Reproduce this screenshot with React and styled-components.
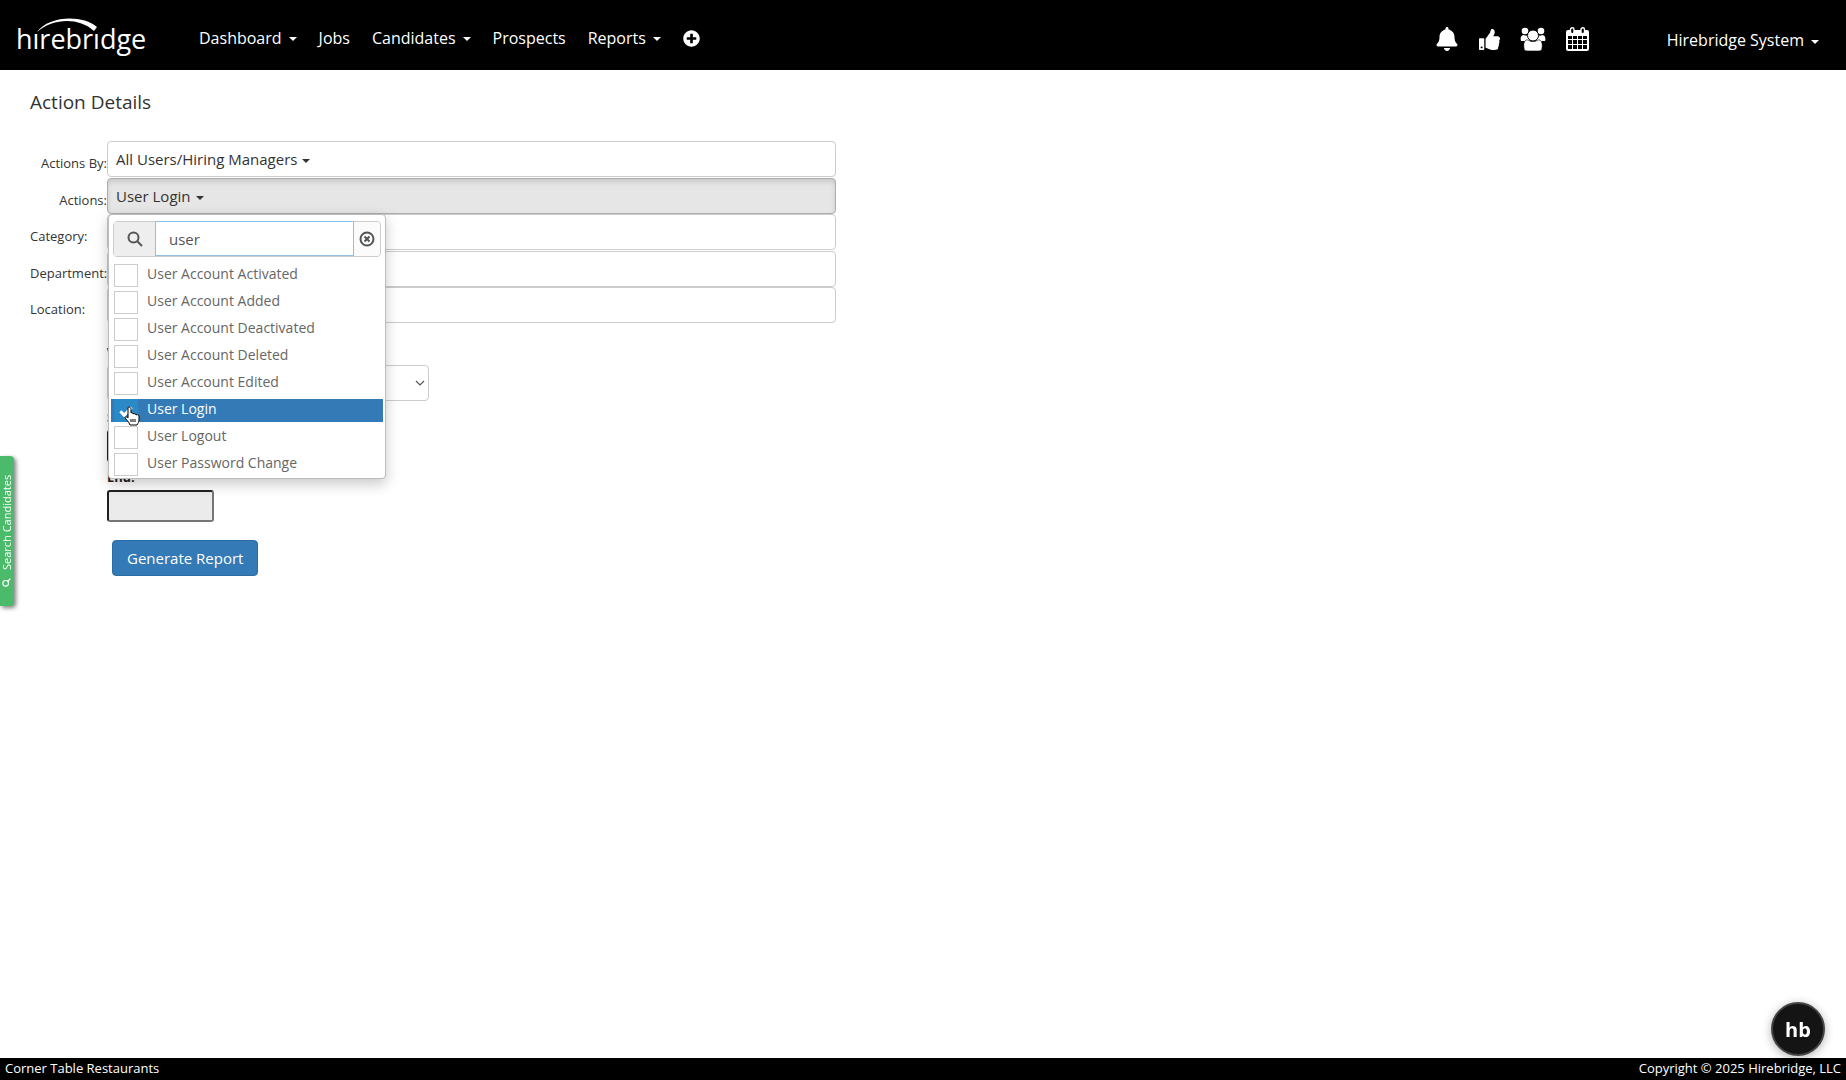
import React, { useState } from "react";
import styled, { createGlobalStyle, css } from "styled-components";
import { FaBell, FaThumbsUp, FaPlusCircle } from "react-icons/fa";

const Global = createGlobalStyle`
  *, *::before, *::after { box-sizing: border-box; }
  body {
    margin: 0;
    background: #fff;
    color: #333;
    font-family: "Open Sans", "Noto Sans", sans-serif;
    font-size: 14px;
  }
  button, input, select { font: inherit; color: inherit; }
`;

const Page = styled.div`
  display: flex;
  flex-direction: column;
  min-height: 100vh;
`;

const TopBar = styled.header`
  display: flex;
  align-items: center;
  height: 70px;
  padding: 0 27px 0 16px;
  background: #000;
  color: #fff;
`;

const LogoLink = styled.a`
  display: flex;
  margin-right: 49px;
`;

const Nav = styled.nav`
  display: flex;
  align-items: center;
  flex: 1;
  gap: 22px;
  padding-top: 5px;
`;

const NavButton = styled.button`
  display: inline-flex;
  align-items: center;
  gap: 7px;
  margin: 0;
  padding: 0;
  border: 0;
  background: none;
  color: #fff;
  font-size: 16px;
  line-height: 24px;
  cursor: pointer;
`;

const AddButton = styled(NavButton)`
  padding-top: 2px;
`;

const AccountButton = styled(NavButton)`
  padding-top: 10px;
`;

const NavLink = styled.a`
  color: #fff;
  font-size: 16px;
  line-height: 24px;
  text-decoration: none;
`;

const Caret = styled.span`
  display: inline-block;
  margin-top: 3px;
  border-top: 4px solid currentColor;
  border-right: 4px solid transparent;
  border-left: 4px solid transparent;
`;

const IconLinks = styled.div`
  display: flex;
  align-items: center;
  gap: 20px;
  margin-right: 78px;
  padding-top: 8px;
`;

const IconLink = styled.a`
  display: flex;
  color: #fff;
`;

const Main = styled.main`
  flex: 1;
  padding: 20px 30px;
`;

const Title = styled.h1`
  margin: 0 0 27px;
  font-size: 19px;
  font-weight: 400;
  line-height: 24px;
`;

const Field = styled.div`
  position: relative;
  display: grid;
  grid-template-columns: 77px minmax(0, 729px);
  &:nth-of-type(odd) { margin-bottom: 1px; }
`;

const FieldLabel = styled.label`
  padding-top: 12px;
  font-size: 13px;
  line-height: 20px;
  white-space: nowrap;
  text-align: ${(p) => (p.$start ? "left" : "right")};
`;

const PickerButton = styled.button`
  display: flex;
  align-items: center;
  gap: 5px;
  height: 36px;
  padding: 0 8px;
  border: 1px solid #ccc;
  border-radius: 4px;
  background: #fff;
  font-size: 15px;
  line-height: 20px;
  text-align: left;
  ${(p) =>
    p.$open &&
    css`
      border-color: #adadad;
      background: #e6e6e6;
      box-shadow: inset 0 3px 5px rgba(0, 0, 0, 0.13);
    `}
`;

const Menu = styled.div`
  position: absolute;
  z-index: 2;
  top: 100%;
  left: 78px;
  width: 278px;
  padding: 6px 2px 2px;
  border: 1px solid #bbb;
  border-radius: 4px;
  background: #fff;
  box-shadow: 0 5px 14px rgba(0, 0, 0, 0.22);
`;

const SearchGroup = styled.div`
  display: flex;
  height: 36px;
  margin: 0 2px 7px;
  border: 1px solid #ccc;
  border-radius: 4px;
  background: #fff;
  color: #555;
`;

const SearchAddon = styled.span`
  display: flex;
  flex: 0 0 41px;
  align-items: center;
  justify-content: center;
  background: #eee;
`;

const SearchInput = styled.input`
  flex: 1;
  min-width: 0;
  margin: -1px 0 0;
  padding: 0 13px;
  border: 1px solid #8fc0e8;
  outline: 0;
  background: #fff;
  font-size: 15px;
`;

const ClearButton = styled.button`
  display: flex;
  flex: 0 0 26px;
  align-items: center;
  justify-content: center;
  padding: 0;
  border: 0;
  border-radius: 0 4px 4px 0;
  background: #fbfbfb;
`;

const Options = styled.ul`
  display: grid;
  gap: 4px;
  margin: 0;
  padding: 0;
  list-style: none;
`;

const OptionLabel = styled.label`
  display: flex;
  align-items: flex-start;
  gap: 9px;
  height: 23px;
  padding-left: 3px;
  background: ${(p) => (p.$checked ? "#337ab7" : "transparent")};
  color: ${(p) => (p.$checked ? "#fff" : "#666")};
  font-size: 14px;
  line-height: 20px;
`;

const OptionBox = styled.input`
  appearance: none;
  display: grid;
  place-items: center;
  flex: none;
  width: 24px;
  height: 23px;
  margin: 0;
  border: 1px solid #ccc;
  background: #fff;
  &:checked {
    border-color: #2a8ac8;
    background: #2a8ac8;
  }
  &:checked::before {
    content: "";
    width: 12px;
    height: 7px;
    border: solid #fff;
    border-width: 0 0 3px 3px;
    transform: rotate(-45deg);
  }
`;

const Dates = styled.div`
  display: flex;
  flex-direction: column;
  align-items: flex-start;
  padding: 16px 0 0 77px;
`;

const DateLabel = styled.label`
  font-size: 13px;
  font-weight: 700;
  line-height: 25px;
  color: #222;
`;

const RangeSelect = styled.select`
  appearance: none;
  width: 322px;
  height: 36px;
  padding: 0 12px;
  border: 1px solid #ccc;
  border-radius: 4px;
  background: #fff;
`;

const SelectWrap = styled.div`
  display: grid;
  align-items: center;
  margin-bottom: 4px;
  & > * { grid-area: 1 / 1; }
  & > svg { justify-self: end; margin-right: 4px; pointer-events: none; }
`;

const DateInput = styled.input`
  width: 107px;
  height: 32px;
  margin-bottom: 3px;
  border: 2px inset #767676;
  border-radius: 3px;
  background: #ebebeb;
`;

const Submit = styled.button`
  height: 36px;
  margin: 15px 5px 0;
  padding: 0 14px;
  border: 1px solid #2e6da4;
  border-radius: 4px;
  background: #337ab7;
  color: #fff;
  font-size: 15px;
`;

const SideTab = styled.button`
  position: fixed;
  top: 456px;
  left: 0;
  display: flex;
  align-items: center;
  justify-content: center;
  gap: 8px;
  width: 14px;
  height: 150px;
  padding: 0;
  border: 0;
  border-radius: 4px 0 0 4px;
  background: #4cba6b;
  box-shadow: -2px -2px 4px rgba(0, 0, 0, 0.5);
  color: #fff;
  font-size: 11px;
  line-height: 14px;
  white-space: nowrap;
  writing-mode: vertical-rl;
  transform: rotate(180deg);
  & > svg { transform: rotate(90deg); }
`;

const Footer = styled.footer`
  display: flex;
  justify-content: space-between;
  height: 22px;
  padding: 0 5px;
  background: #000;
  color: #fff;
  font-size: 13px;
  line-height: 20px;
`;

const ChatButton = styled.button`
  position: fixed;
  right: 21px;
  bottom: 24px;
  width: 54px;
  height: 54px;
  padding: 0;
  border: 2px solid #444;
  border-radius: 50%;
  background: #141414;
  box-shadow: 0 2px 10px rgba(0, 0, 0, 0.3);
  color: #fff;
  font-size: 20px;
  font-weight: 700;
`;

const Pointer = styled.svg`
  position: fixed;
  z-index: 3;
  top: 406px;
  left: 124px;
  pointer-events: none;
`;

const Logo = () => (
  <svg width="134" height="44" viewBox="0 0 134 44" role="img" aria-label="hirebridge">
    <text x="0" y="36" fill="#fff" fontFamily="Open Sans, sans-serif" fontSize="27">hirebridge</text>
    <path d="M17 13h6v7h-6zM77 13h8v7h-8z" fill="#000" />
    <path d="M21 19C32 3 66 1 81 14l-3 4C63 4 37 5 21 19Z" fill="#fff" />
  </svg>
);

const Glass = ({ size, width = 2 }) => (
  <svg width={size} height={size} viewBox="0 0 16 16" fill="none" stroke="currentColor" strokeWidth={width}>
    <circle cx="6.5" cy="6.5" r="5" />
    <path d="m10 10 5 5" />
  </svg>
);

const Group = () => (
  <svg width="26" height="24" viewBox="0 0 26 24" fill="#fff">
    <circle cx="5" cy="4" r="3.3" />
    <circle cx="21" cy="4" r="3.3" />
    <path d="M1 14c-1-3 0-6 3-6 1 1 3 1 4 0 0 3 1 5 2 6Z" />
    <path d="M25 14c1-3 0-6-3-6-1 1-3 1-4 0 0 3-1 5-2 6Z" />
    <circle cx="13" cy="8.500" r="5.500" stroke="#000" />
    <path d="M4 21c-1-5 1-9 4-8 3 2 7 2 10 0 3-1 5 3 4 8 0 2-1 3-3 3H7c-2 0-3-1-3-3Z" stroke="#000" strokeWidth=".6" />
  </svg>
);

const CalendarGrid = () => (
  <svg width="23" height="24" viewBox="0 0 23 24">
    <rect x="0" y="3" width="23" height="21" rx="2" fill="#fff" />
    <path d="M2 9h4v3H2zM7 9h4v3H7zM12 9h4v3h-4zM17 9h4v3h-4zM2 13h4v4H2zM7 13h4v4H7zM12 13h4v4h-4zM17 13h4v4h-4zM2 18h4v4H2zM7 18h4v4H7zM12 18h4v4h-4zM17 18h4v4h-4z" fill="#000" />
    <rect x="4.500" y=".8" width="3.500" height="6" rx="1.700" fill="#000" stroke="#fff" strokeWidth="1.400" />
    <rect x="15" y=".8" width="3.500" height="6" rx="1.700" fill="#000" stroke="#fff" strokeWidth="1.400" />
  </svg>
);

const OPTIONS = [
  "User Account Activated",
  "User Account Added",
  "User Account Deactivated",
  "User Account Deleted",
  "User Account Edited",
  "User Login",
  "User Logout",
  "User Password Change",
];

const FIELDS = [
  { id: "by", label: "Actions By:", value: "All Users/Hiring Managers" },
  { id: "actions", label: "Actions:", value: "User Login", open: true },
  { id: "category", label: "Category:", start: true },
  { id: "department", label: "Department:" },
  { id: "location", label: "Location:", start: true },
];

function ActionsMenu() {
  const [query, setQuery] = useState("user");
  const [selected, setSelected] = useState("User Login");
  const shown = OPTIONS.filter((o) => o.toLowerCase().includes(query.toLowerCase()));
  return (
    <Menu>
      <SearchGroup>
        <SearchAddon><Glass size={16} /></SearchAddon>
        <SearchInput aria-label="Search actions" value={query} onChange={(e) => setQuery(e.target.value)} />
        <ClearButton aria-label="Clear search" onClick={() => setQuery("")}>
          <svg width="16" height="16" viewBox="0 0 16 16" fill="none" stroke="currentColor" strokeWidth="2">
            <circle cx="8" cy="8" r="6.500" />
            <path d="m5.500 5.500 5 5m0-5-5 5" />
          </svg>
        </ClearButton>
      </SearchGroup>
      <Options>
        {shown.map((name) => (
          <li key={name}>
            <OptionLabel $checked={name === selected}>
              <OptionBox type="checkbox" checked={name === selected} onChange={() => setSelected(name)} />
              {name}
            </OptionLabel>
          </li>
        ))}
      </Options>
    </Menu>
  );
}

export default function App() {
  return (
    <Page>
      <Global />
      <TopBar>
        <LogoLink href="#home"><Logo /></LogoLink>
        <Nav>
          <NavButton>Dashboard <Caret /></NavButton>
          <NavLink href="#jobs">Jobs</NavLink>
          <NavButton>Candidates <Caret /></NavButton>
          <NavLink href="#prospects">Prospects</NavLink>
          <NavButton>Reports <Caret /></NavButton>
          <AddButton aria-label="Add"><FaPlusCircle size={17} /></AddButton>
        </Nav>
        <IconLinks>
          <IconLink href="#alerts" aria-label="Alerts"><FaBell size={24} /></IconLink>
          <IconLink href="#approvals" aria-label="Approvals"><FaThumbsUp size={21} /></IconLink>
          <IconLink href="#team" aria-label="Team"><Group /></IconLink>
          <IconLink href="#calendar" aria-label="Calendar"><CalendarGrid /></IconLink>
        </IconLinks>
        <AccountButton>Hirebridge System <Caret /></AccountButton>
      </TopBar>
      <Main>
        <Title>Action Details</Title>
        {FIELDS.map((f) => (
          <Field key={f.id}>
            <FieldLabel htmlFor={f.id} $start={f.start}>{f.label}</FieldLabel>
            <PickerButton id={f.id} $open={f.open}>
              {f.value}
              {f.value && <Caret />}
            </PickerButton>
            {f.open && <ActionsMenu />}
          </Field>
        ))}
        <Dates>
          <DateLabel htmlFor="when">When:</DateLabel>
          <SelectWrap>
            <RangeSelect id="when" />
            <svg width="10" height="7" viewBox="0 0 10 7" fill="none" stroke="#555" strokeWidth="1.200"><path d="m1 1 4 4 4-4" /></svg>
          </SelectWrap>
          <DateLabel htmlFor="start">Start:</DateLabel>
          <DateInput id="start" />
          <DateLabel htmlFor="end">End:</DateLabel>
          <DateInput id="end" />
          <Submit>Generate Report</Submit>
        </Dates>
      </Main>
      <SideTab><Glass size={9} /><span>Search Candidates</span></SideTab>
      <Footer>
        <span>Corner Table Restaurants</span>
        <span>Copyright © 2025 Hirebridge, LLC</span>
      </Footer>
      <ChatButton>hb</ChatButton>
      <Pointer width="16" height="20" viewBox="0 0 16 20">
        <path d="M5 1c1 0 2 1 2 2v4c1-1 2 0 2 1 1-1 3 0 3 1 1-1 3 0 3 1v4c0 2-1 3-2 5H6C5 16 2 13 1 12c0-2 2-1 3 0V3c0-1 0-2 1-2Z" fill="#fff" stroke="#000" />
        <path d="M7 13v3M9 13v3M11 13v3" stroke="#000" />
      </Pointer>
    </Page>
  );
}
